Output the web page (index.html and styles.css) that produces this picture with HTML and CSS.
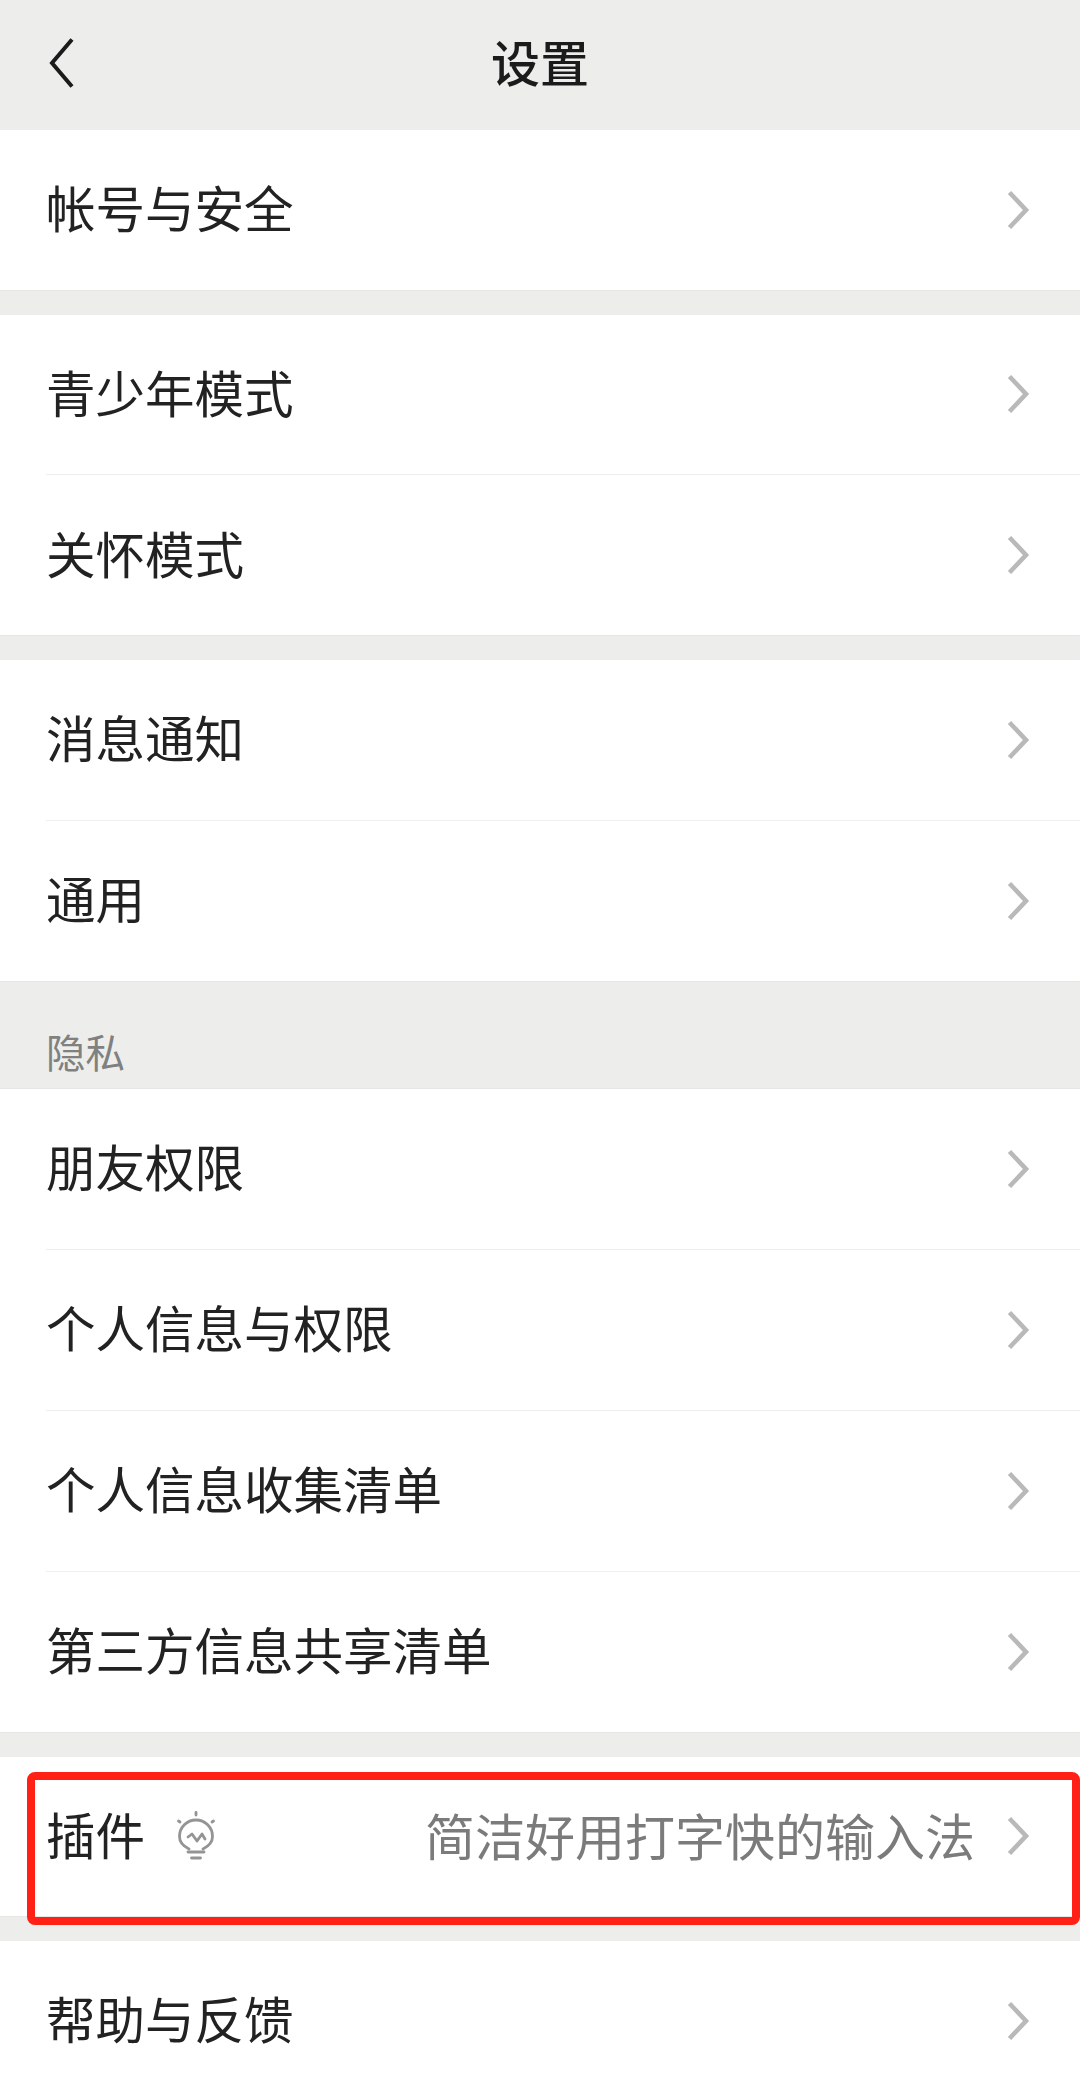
FILE: index.html
```html
<!DOCTYPE html>
<html lang="zh-CN">
<head>
<meta charset="utf-8">
<title>设置</title>
<link rel="stylesheet" href="styles.css">
</head>
<body>
<svg class="defs" width="0" height="0" aria-hidden="true">
  <symbol id="chev" viewBox="0 0 24 40"><path d="M3.500 2.500 L20 20 L3.500 37.500" fill="none" stroke="currentColor" stroke-width="4.600"/></symbol>
</svg>
<div class="page">
  <header class="topbar">
    <svg class="back" viewBox="0 0 28 52" aria-hidden="true"><path d="M25 2.500 L5 26 L25 49.500" fill="none" stroke="#1b1b1b" stroke-width="4"/></svg>
    <h1 class="title">设置</h1>
  </header>

  <section class="group">
    <div class="row"><span class="label">帐号与安全</span><svg class="chev"><use href="#chev"/></svg></div>
  </section>

  <section class="group">
    <div class="row"><span class="label">青少年模式</span><svg class="chev"><use href="#chev"/></svg></div>
    <div class="row"><span class="label">关怀模式</span><svg class="chev"><use href="#chev"/></svg></div>
  </section>

  <section class="group group-last">
    <div class="row"><span class="label">消息通知</span><svg class="chev"><use href="#chev"/></svg></div>
    <div class="row"><span class="label">通用</span><svg class="chev"><use href="#chev"/></svg></div>
  </section>

  <div class="section-head">隐私</div>

  <section class="group">
    <div class="row"><span class="label">朋友权限</span><svg class="chev"><use href="#chev"/></svg></div>
    <div class="row"><span class="label">个人信息与权限</span><svg class="chev"><use href="#chev"/></svg></div>
    <div class="row"><span class="label">个人信息收集清单</span><svg class="chev"><use href="#chev"/></svg></div>
    <div class="row"><span class="label">第三方信息共享清单</span><svg class="chev"><use href="#chev"/></svg></div>
  </section>

  <section class="group group-plugin">
    <div class="row">
      <span class="label">插件</span>
      <svg class="bulb" viewBox="0 0 40 50" aria-hidden="true">
        <g fill="none" stroke="#949494" stroke-width="2.800" stroke-linecap="round" stroke-linejoin="round">
          <path d="M20 1.500 V4"/>
          <path d="M2.500 10 L4 11"/>
          <path d="M37.500 10 L36 11"/>
          <path d="M13 38 C7 35 3.500 31 3.500 25.500 A16.500 16.500 0 0 1 36.500 25.500 C36.500 31 33 35 27 38"/>
          <path d="M12 26 L16 23 L21 30 L26 23 L29 28"/>
          <path d="M12 41 H28"/>
          <path d="M15.500 47 H24.500"/>
        </g>
      </svg>
      <span class="value">简洁好用打字快的输入法</span>
      <svg class="chev"><use href="#chev"/></svg>
    </div>
    <div class="highlight"></div>
  </section>

  <section class="group">
    <div class="row"><span class="label">帮助与反馈</span><svg class="chev"><use href="#chev"/></svg></div>
  </section>
</div>
</body>
</html>
```
FILE: styles.css
```css
* { box-sizing: border-box; }
html, body { margin: 0; padding: 0; }
body {
  background: #ededeb;
  font-family: "Noto Sans CJK SC", "Liberation Sans", sans-serif;
  overflow: hidden;
  height: 2076px;
}
.defs { position: absolute; }
.page { display: flex; flex-direction: column; }
.topbar {
  position: relative;
  height: 130px;
  padding-left: 47px;
  display: flex;
  align-items: center;
}
.back { width: 28px; height: 52px; margin-top: -4px; }
.title {
  position: absolute;
  left: 0;
  right: 0;
  top: 34px;
  margin: 0;
  text-align: center;
  font-size: 49px;
  line-height: 54px;
  font-weight: 500;
  color: #1b1b1b;
}
.group {
  background: #fff;
  margin-bottom: 24px;
  border-bottom: 1px solid #e6e6e4;
}
.row {
  height: 161px;
  margin-left: 46px;
  padding-right: 50px;
  display: flex;
  align-items: center;
  border-top: 1px solid #eeeeee;
}
.row:first-child { height: 159.5px; border-top: 0; }
.label {
  font-size: 49.5px;
  line-height: 60px;
  color: #222;
  margin: 0 0 5px 0;
}
.chev { width: 24px; height: 40px; margin-left: auto; color: #b9b9b9; flex: none; }
.group-last { margin-bottom: 0; }
.section-head {
  height: 107.5px;
  padding: 44px 0 0 46px;
  font-size: 39.500px;
  line-height: 50px;
  color: #808080;
  border-bottom: 1px solid #e6e6e4;
}
.group-plugin { position: relative; }
.bulb { width: 40px; height: 50px; margin-left: 31px; flex: none; }
.value {
  margin-left: auto;
  margin-bottom: 5px;
  font-size: 50px;
  line-height: 60px;
  color: #7b7b7b;
}
.value + .chev { margin-left: 31px; }
.highlight {
  position: absolute;
  left: 27px;
  right: 0;
  top: 15.5px;
  height: 153px;
  border: 8px solid #ff2116;
  border-radius: 8px;
}
```
